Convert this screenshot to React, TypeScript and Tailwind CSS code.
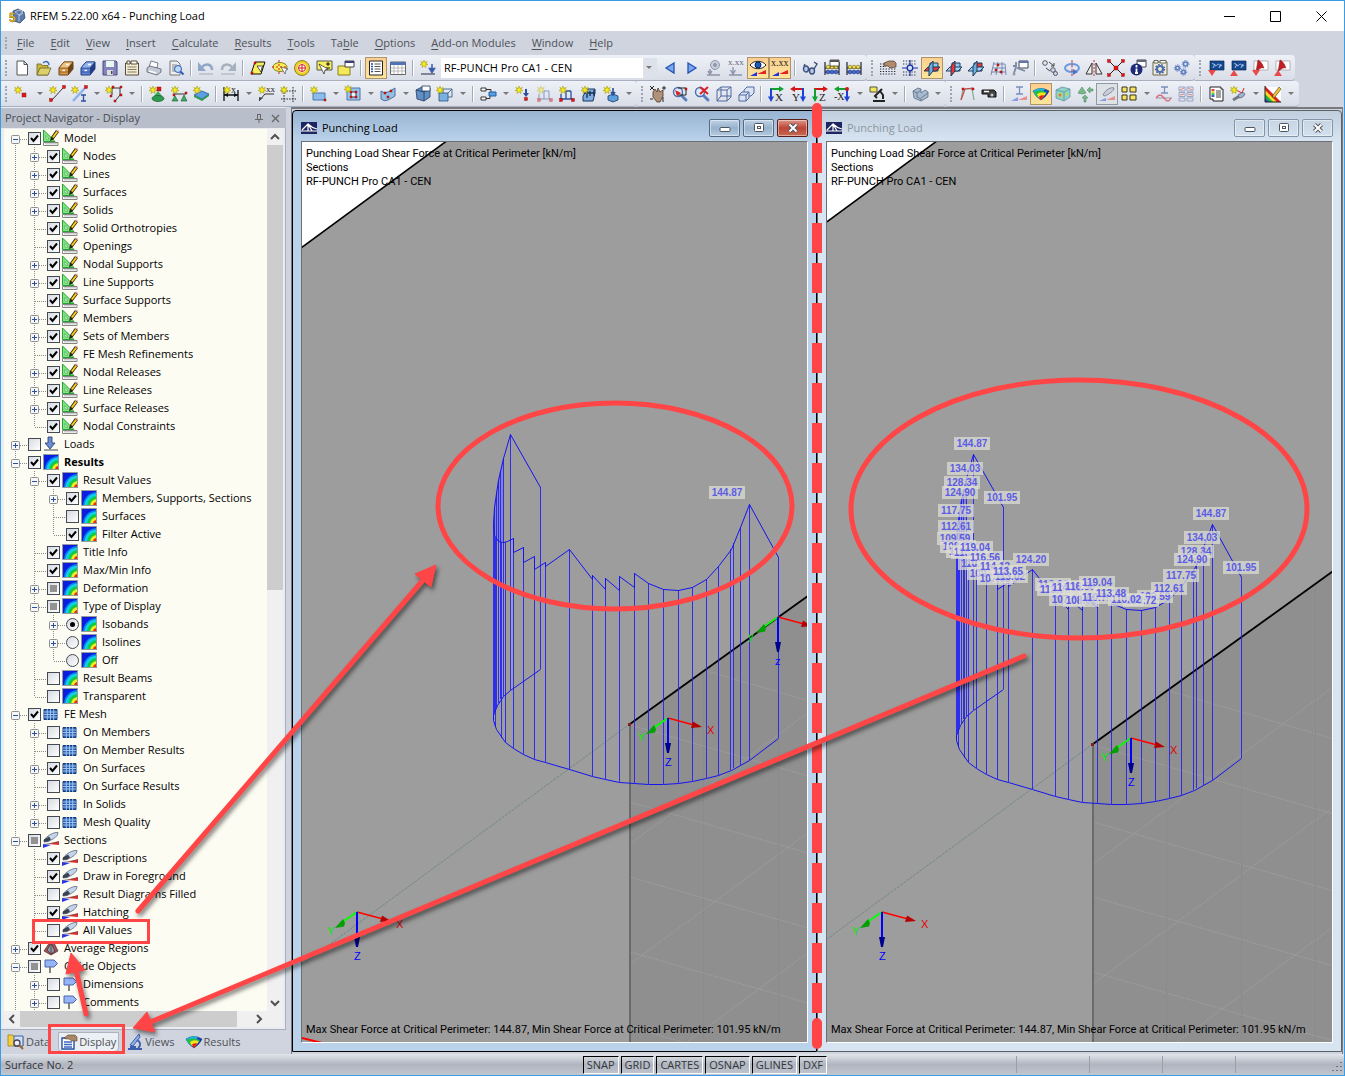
import React, { useState } from 'react';
import clsx from 'clsx';

/* ---------- icon primitives ---------- */

const Star = ({ x = 4, y = 4 }: { x?: number; y?: number }) => (
  <g transform={`translate(${x} ${y})`}>
    <path d="M0-4 1-1.4 3.2-2.6 1.8-.6 4 .6 1.5.9 2 3.6 0 1.8-2 3.6-1.5.9-4 .6-1.8-.6-3.2-2.6-1-1.4Z" fill="#f4ea1c" stroke="#a89c12" strokeWidth=".6" />
  </g>
);

const Dot = ({ x, y, s = 3 }: { x: number; y: number; s?: number }) => (
  <rect x={x - s / 2} y={y - s / 2} width={s} height={s} fill="#e01818" stroke="#8a0808" strokeWidth=".4" />
);

const Txt = ({ x, y, c = '#222', s = 7, children }: { x: number; y: number; c?: string; s?: number; children: string }) => (
  <text x={x} y={y} fill={c} fontSize={s} fontFamily="Liberation Serif, serif">{children}</text>
);

const Cabinet = ({ top, front, dark }: { top: string; front: string; dark: string }) => (
  <g strokeLinejoin="round">
    <path d="m1 8 5-6h9v7l-5 6H1Z" fill={front} stroke={dark} />
    <path d="m1 8 5-6h9l-5 6Z" fill={top} stroke={dark} strokeWidth=".7" />
    <path d="m10 8 5-6v7l-5 6Z" fill={dark} />
    <path d="M4.500 10.500h2.500M8 4.500h3" stroke="#fff" strokeWidth="1.400" />
    <path d="M1 12h9" stroke={dark} strokeWidth=".6" />
  </g>
);

const Book = ({ red }: { red?: boolean }) => (
  <g>
    <path d="M2 1h14v9H2Z" fill={red ? '#fff' : '#14498f'} stroke={red ? '#999' : '#0c2a58'} strokeWidth=".7" />
    {red ? <path d="M4 12 6 0c4 2 5 6 6 8-3-1-5 1-8 4Z" fill="#c41e24" stroke="#7c1014" strokeWidth=".5" /> : <path d="M4 4c2-2 3 4 5 1s3 3 5 0M5 8l2-4M11 8l2-4" stroke="#cfe2ff" strokeWidth=".8" fill="none" />}
  </g>
);

const Cross3 = ({ fill }: { fill: 'h' | 'v' | 'd' }) => (
  <g strokeWidth="1" strokeLinejoin="round">
    <path d="M6 3h8v8H6Z" fill={fill === 'd' ? '#f03434' : '#8ccaf0'} stroke="#1c3c60" />
    <path d="M0 11 4 7h12l-4 4Z" fill={fill === 'h' ? '#f03434' : '#a4d4f4'} stroke="#1c3c60" />
    <path d="M5 6 9 1v10l-4 5Z" fill={fill === 'v' ? '#f03434' : '#6cb0e0'} stroke="#1c3c60" />
  </g>
);

const Cards = () => (
  <g fill="none" stroke="#223" strokeWidth="1.200">
    <path d="M1 15V2M15 15V2M1 12h14M1 8h14" />
    <g fill="#4a6ed0" stroke="#1a2f80" strokeWidth=".6"><circle cx="4" cy="12" r="1.900" /><circle cx="8" cy="12" r="1.900" /><circle cx="12" cy="12" r="1.900" /></g>
    <g fill="#f0e040" stroke="#776a10" strokeWidth=".6"><circle cx="4" cy="7" r="1.800" /><circle cx="8" cy="7" r="1.800" /><circle cx="12" cy="7" r="1.800" /></g>
  </g>
);

const AxisView = ({ l, a, b }: { l: string; a: string; b: string }) => (
  <g>
    <path d="M2 3h10" stroke={a} strokeWidth="2" /><path d="M11 0 16 3l-5 3Z" fill={a} />
    <path d="M3 3v9" stroke={b} strokeWidth="2" /><path d="M0 10.500 3 16l3-5.500Z" fill={b} />
    <Txt x={7} y={15} s={11}>{l}</Txt>
  </g>
);

const Lens = ({ handle = '#5a7fc0' }: { handle?: string }) => (
  <g><path d="m9 9 5 5" stroke={handle} strokeWidth="3" strokeLinecap="round" /><circle cx="6" cy="6" r="4.500" fill="#dbe9fa" stroke="#4a70b0" strokeWidth="1.400" /></g>
);

const Rainbow = () => (
  <g>
    <path d="M0 5Q8 0 16 5 14 10 8 14 2 10 0 5Z" fill="#1c34d0" stroke="#182a6c" strokeWidth=".6" />
    <path d="M0 5Q6 1 12 3L5 12Q1 9 0 5Z" fill="#18b8d8" />
    <path d="M1 6Q6 3 14 6L9 13Q3 11 1 6Z" fill="#26bc3c" />
    <path d="M4 8Q8 5 13 7.500L8 13.500Q5 12 4 8Z" fill="#f4e41c" />
    <path d="M6 10.500Q9 8.500 11.500 9.500L8 14Q6.500 12.500 6 10.500Z" fill="#e82018" />
  </g>
);

const Star1 = <Star x={4} y={4} />;

const ICONS: Record<string, React.ReactNode> = {
  new: <path d="M3 1h7l3.500 3.500V15H3ZM10 1v3.500h3.500" fill="#fff" stroke="#555" />,
  open: <g stroke="#6e6420" strokeWidth=".8"><path d="M1 15V4h4l1.500 1.500H12V15Z" fill="#c6b640" /><path d="m1 15 3-7h11l-3 7Z" fill="#dccf6c" /><path d="M7 3c3-3 6-1 6 2" stroke="#3b6fb8" strokeWidth="1.500" fill="none" /></g>,
  cabinet: <Cabinet top="#f0c480" front="#d89848" dark="#6c4418" />,
  cabinetBlue: <Cabinet top="#94b4f0" front="#5c84d8" dark="#243c80" />,
  save: <g><path d="M1 1h13l1 1v13H1Z" fill="#8583bd" stroke="#4b4a80" /><path d="M4 1h8v6H4Z" fill="#e8f6ee" /><path d="M5 10h6v5H5Z" fill="#ddd" /><path d="M9 11h1.500v3H9Z" fill="#444" /></g>,
  notes: <g><path d="M1.500 3h13v12h-13Z" fill="#f3ecd4" stroke="#5a4a38" /><path d="M3 1h3v3H3ZM7 1h6v3H7Z" fill="#fff" stroke="#5a4a38" /><path d="M3.500 7h9M3.500 9.500h9M3.500 12h9" stroke="#8a7a62" /></g>,
  print: <g stroke="#5a5f6c" strokeWidth=".8"><path d="m3 7 2-6 7 2-1 5Z" fill="#fff" /><path d="m1 8 3-2 11 3v3l-4 3L1 12Z" fill="#c4c9d6" /><path d="m3 11 7 2" stroke="#fff" strokeWidth="1.500" /></g>,
  preview: <g><path d="M2 1h7l3 3v11H2Z" fill="#eee" stroke="#777" /><path d="M4 5h5M4 7h4M4 9h3M4 11h3" stroke="#888" /><circle cx="10" cy="9" r="3.500" fill="#bcd8fa" stroke="#2d5fb4" /><path d="m12.500 11.500 3 3" stroke="#2d5fb4" strokeWidth="2" /></g>,
  undo: <g><path d="M4 7c4-4 10-3 10 3" fill="none" stroke="#8fa6c6" strokeWidth="2.500" /><path d="M0 2v9h8Z" fill="#8fa6c6" /><path d="M1 14h14" stroke="#a4adbb" /></g>,
  redo: <g><path d="M12 7C8 3 2 4 2 10" fill="none" stroke="#a7b0bd" strokeWidth="2.500" /><path d="M16 2v9H8Z" fill="#a7b0bd" /><path d="M1 14h14" stroke="#a4adbb" /></g>,
  selPara: <g><path d="M5 2h10l-4 12H1Z" fill="#f6ee5a" stroke="#111" /><path d="m7 6 4 6 1-5 2-1Z" fill="#fff" stroke="#111" strokeWidth=".7" /><Dot x={5} y={3} s={2} /><Dot x={2} y={13} s={2} /></g>,
  selEllipse: <g><ellipse cx="8" cy="7" rx="7" ry="4.500" fill="#f6ee5a" stroke="#8a8020" /><path d="M7 0v14M0 7h15" stroke="#e01818" strokeDasharray="2 2" /><path d="m9 7 4 7 1-4 2-1Z" fill="#fff" stroke="#333" strokeWidth=".6" /></g>,
  selRing: <g><circle cx="8" cy="8" r="6" fill="#fff" stroke="#f0d020" strokeWidth="3" /><circle cx="8" cy="8" r="7.500" fill="none" stroke="#7a6a10" strokeWidth=".8" /><circle cx="8" cy="8" r="3.500" fill="none" stroke="#d01818" /><path d="M8 5v6M5 8h6" stroke="#d01818" /></g>,
  selAdd: <g><path d="M1 1h15v9H1Z" fill="#f6ee5a" stroke="#555" /><path d="M10 4h4M12 2v4M10 8h4" stroke="#111" /><path d="m3 4 5 10 1-4 3-1Z" fill="#fff" stroke="#222" strokeWidth=".7" /></g>,
  folderWin: <g><path d="M0 6h12v9H0Z" fill="#f2e858" stroke="#8a8020" /><path d="M7 1h9v6H7Z" fill="#fff" stroke="#444" /><path d="M7 1h9v2H7Z" fill="#3d3d7a" /></g>,
  listPage: <g><path d="M1.500 1h13v14h-13Z" fill="#fff" stroke="#222" /><path d="M3 4h2M3 6.500h2M3 9h2M3 11.500h2" stroke="#2650a8" strokeWidth="1.300" /><path d="M6.500 4h6M6.500 6.500h6M6.500 9h6M6.500 11.500h6" stroke="#555" /></g>,
  table: <g><path d="M.5 2h15v12.500H.5Z" fill="#fff" stroke="#666" /><path d="M.5 2h15v3H.5Z" fill="#4f75b8" /><path d="M4 5v9M8 5v9M12 5v9M1 8h14M1 11h14" stroke="#aaa" strokeWidth=".8" /></g>,
  loadNew: <g>{Star1}<path d="M12 4v6M9.500 8.500 12 12.500l2.500-4Z" stroke="#3c5cae" strokeWidth="1.500" fill="#3c5cae" /><path d="M1 14h14" stroke="#667" strokeWidth="1.500" /></g>,
  left: <path d="m12 3-8 5 8 5Z" fill="#7ca8f0" stroke="#2450b0" strokeWidth="1.300" />,
  right: <path d="m4 3 8 5-8 5Z" fill="#7ca8f0" stroke="#2450b0" strokeWidth="1.300" />,
  eyeArrow: <g opacity=".8"><circle cx="9" cy="5" r="4.500" fill="#c0c8d8" stroke="#78839a" /><circle cx="9" cy="5" r="2" fill="#7c8698" /><path d="M1 15h13M4 9v4M2 11l2 3 2-3" stroke="#78839a" fill="none" strokeWidth="1.400" /></g>,
  xxGrey: <g><Txt x={0} y={5} c="#667" s={9}>x.xx</Txt><path d="M5 7v6M2.500 10 5 14l2.500-4M1 15h13" stroke="#8a94a8" fill="none" strokeWidth="1.300" /></g>,
  eyeOn: <g><path d="M0 5c4-5 12-5 16 0-4 5-12 5-16 0Z" fill="#fff" stroke="#222" /><circle cx="8" cy="5" r="3" fill="#1c5cb8" stroke="#0a1e50" /><path d="M0 16l7-4v4Z" fill="#2838d8" /><path d="m7 14 9-4v4Z" fill="#e82020" /></g>,
  xxOn: <g><Txt x={-1} y={6} s={10}>x.xx</Txt><path d="M0 16l7-4v4Z" fill="#2838d8" /><path d="m7 14 9-4v4Z" fill="#e82020" /></g>,
  glasses: <g fill="#b6ccee" stroke="#3d4f7c" strokeWidth="1.400"><ellipse cx="4" cy="9" rx="2.500" ry="3" /><ellipse cx="10" cy="11" rx="2.500" ry="3" /><path d="M2 6 3 4M12 9l3-5-3-2M6 9h2" fill="none" /></g>,
  abacusWin: <g><Cards /><path d="M6 0h9v6H6Z" fill="#fff" stroke="#333" strokeWidth=".8" /><path d="M6 0h9v2H6Z" fill="#555" /></g>,
  abacus: <Cards />,
  handGrid: <g><path d="M0 9h16M0 11.500h16M0 14h16M0 6.500h6M0 4h4" stroke="#223" strokeDasharray="1.300 1.500" /><path d="M4 3 9 1h5l2 2v4l-6 1-2-2H4Z" fill="#b08c6c" stroke="#4c3822" strokeWidth=".7" /></g>,
  gridTarget: <g><path d="M1 1h14M1 4h14M1 12h14M1 15h14" stroke="#334" strokeDasharray="1.300 1.500" /><path d="M8 0v16M0 8h16" stroke="#1a2fa0" strokeWidth="1.200" /><circle cx="8" cy="8" r="2.800" fill="#cfe0fa" stroke="#1a2fa0" strokeWidth="1.300" /></g>,
  planeH: <Cross3 fill="h" />,
  planeV: <Cross3 fill="v" />,
  planeD: <Cross3 fill="d" />,
  gridRed: <g><path d="m4 2-3 13M8 2 6 15M12 2v13M3 4h12l1 11M3 8h12M1 12h15" stroke="#7a8ab0" fill="none" /><Dot x={8} y={5} s={2} /><Dot x={6} y={10} s={2} /><Dot x={11} y={12} s={2} /></g>,
  snapWin: <g><path d="M7 1h9v7H7Z" fill="#fff" stroke="#445" /><path d="M7 1h9v2H7Z" fill="#6474a8" /><path d="M4 2v5l-2 6M5 8l8 3M4 6H1" stroke="#7a88a4" strokeWidth="1.800" fill="none" /><circle cx="2" cy="14" r="1.500" fill="#99a" /></g>,
  circles: <g fill="none" stroke="#556"><circle cx="3" cy="3" r="2.300" /><circle cx="11" cy="10" r="2.300" fill="#cfd6e8" /><circle cx="13.500" cy="13.500" r="2" fill="#cfd6e8" /><path d="m4 8 4 3M7 2l5 4M12 3v3H9" stroke="#444" /></g>,
  rotate: <g fill="none"><ellipse cx="8" cy="8" rx="7" ry="4" stroke="#6c9ae0" strokeWidth="2" /><path d="M8 0v16" stroke="#c33" strokeDasharray="3 1.500" /><path d="m9 9 5 3-5 3Z" fill="#4a78c8" /></g>,
  mirror: <g fill="#eee" stroke="#333"><path d="M6 3v11H0ZM10 3v11h6Z" /><path d="M8 0v16" stroke="#d22" strokeDasharray="2 1.500" /></g>,
  crossRed: <g><path d="M2 2l12 12M14 2 2 14" stroke="#222" /><Dot x={1} y={1} /><Dot x={15} y={1} /><Dot x={1} y={15} /><Dot x={15} y={15} /><Dot x={8} y={8} s={4} /></g>,
  info: <g><path d="M7 0h9v7H7Z" fill="#fff" stroke="#445" /><path d="M7 0h9v2H7Z" fill="#667" /><circle cx="6.500" cy="9.500" r="6" fill="#1c2a78" /><path d="M6.500 5v2.500M6.500 8.500v4.500M5 13h3" stroke="#fff" strokeWidth="1.800" /></g>,
  gearBox: <g><path d="M1 2h14v13H1Z" fill="#f2ecd8" stroke="#665" /><path d="M2 .5h4V3H2ZM8 .5h6V3H8Z" fill="#fff" stroke="#665" /><circle cx="8" cy="9" r="3" fill="none" stroke="#4f6fb0" strokeWidth="2.200" /><circle cx="8" cy="9" r="4.600" fill="none" stroke="#3f5fa8" strokeWidth="1.200" strokeDasharray="1.600 1.600" /></g>,
  gears: <g fill="none" stroke="#5a7ac0" strokeWidth="1.600"><circle cx="3.500" cy="8" r="1.800" /><circle cx="11.500" cy="4" r="2" /><circle cx="9.500" cy="12" r="1.800" /><g strokeWidth="1" strokeDasharray="1.200 1.200"><circle cx="3.500" cy="8" r="3.200" /><circle cx="11.500" cy="4" r="3.400" /><circle cx="9.500" cy="12" r="3.200" /></g></g>,
  bookDown: <g><Book /><path d="M0 10h8l-4 6Z" fill="#e84a4a" /></g>,
  bookUp: <g><Book /><path d="M0 16h8l-4-6Z" fill="#e84a4a" /></g>,
  pdfDown: <g><Book red /><path d="M0 10h8l-4 6Z" fill="#e84a4a" /></g>,
  pdfUp: <g><Book red /><path d="M0 16h8l-4-6Z" fill="#e84a4a" /></g>,

  node: <g>{Star1}<Dot x={10} y={9} s={4} /></g>,
  line: <g><path d="M3 14 14 2" stroke="#333" /><Star x={4} y={4} /><Dot x={2} y={14} /><Dot x={15} y={1} /></g>,
  member: <g><path d="M2 15 14 2" stroke="#8cb0f0" strokeWidth="2.500" />{Star1}<Dot x={15} y={1} /><path d="M10 9h5M10 15h5M12.500 9v6" stroke="#2d4f9e" strokeWidth="1.300" /></g>,
  polyline: <g><path d="M6 2h8v7l-4 5M6 2v7" stroke="#333" fill="none" /><Star x={3} y={4} /><Dot x={7} y={1} s={2} /><Dot x={15} y={1} s={2} /><Dot x={15} y={9} s={2} /><Dot x={5} y={10} s={2} /><Dot x={9} y={15} s={2} /></g>,
  support: <g>{Star1}<Dot x={10} y={3} s={4} /><path d="M9 5 5 10h8Z" fill="#3eac60" /><ellipse cx="9" cy="12.500" rx="6" ry="3" fill="#2e9c50" stroke="#155a2a" strokeWidth=".7" /></g>,
  lineSupport: <g><path d="M3 8h12" stroke="#333" />{Star1}<Dot x={3} y={9} s={2} /><Dot x={15} y={7} s={2} /><path d="M4 10 1 15h6ZM13 9l-3 6h6Z" fill="#3eac60" stroke="#155a2a" strokeWidth=".6" /></g>,
  surfSupport: <g><path d="m1 9 8-4 7 3-7 5Z" fill="#5aa0e8" stroke="#1e4a80" strokeWidth=".7" /><path d="M1 9v2l8 4 7-5V8l-7 5Z" fill="#2e9c50" />{Star1}</g>,
  dim: <g><path d="M1 1v14M15 4v11M1 9h14" stroke="#111" strokeWidth="1.300" /><path d="m1 9 4-2v4ZM15 9l-4-2v4Z" fill="#111" /><Star x={4} y={4} /><Txt x={8} y={7} s={10}>x</Txt></g>,
  comment: <g><path d="m1 15 6-7h9" stroke="#333" fill="none" /><Star x={4} y={4} /><Txt x={8} y={6} s={9}>xx</Txt><path d="M1 15v-4l4 1Z" fill="#444" /></g>,
  gridNew: <g><path d="M4 1v15M13 1v15M1 5h15M1 13h15" stroke="#222" strokeDasharray="1.500 1.200" />{Star1}</g>,
  surface: <g><path d="M3 7h12v7H3Z" fill="#8cbcec" stroke="#4878a8" />{Star1}<Dot x={15} y={14} s={2} /></g>,
  opening: <g><path d="M2 2h13v12H2Z" fill="#9cc4ec" stroke="#4878a8" /><path d="M6 6h5v5H6Z" fill="#eef4fc" stroke="#445" /><Dot x={6} y={6} s={2} /><Dot x={11} y={6} s={2} /><Dot x={6} y={11} s={2} /><Dot x={11} y={11} s={2} /><Star x={3} y={3} /></g>,
  fold: <g><path d="M1 5q3 3 7 1t7-4v8q-3 2-7 4t-7-1Z" fill="#94c0e4" stroke="#48709c" /><Dot x={5} y={7} s={2} /><Dot x={11} y={5} s={2} /><Dot x={8} y={11} s={2} /></g>,
  solid: <g stroke="#223a5e" strokeWidth=".8"><path d="m1 4 6-3 8 1v9l-6 4-7-2Z" fill="#5f8fc4" /><path d="m1 4 8 2v9M9 6l6-4" fill="none" /><path d="M7 0h8v5H7Z" fill="#fff" /></g>,
  solidNew: <g stroke="#28517e" strokeWidth=".8"><path d="M2 7h9v8H2Z" fill="#7ab0e0" /><path d="M6 3h9v8h-4M6 3v4M11 7l4-4" fill="none" /><Star x={3} y={4} /></g>,
  boxes: <g><path d="M1 2h5v3H1ZM1 11h5v3H1Z" fill="#fff" stroke="#333" /><path d="M6 3.500h5v4M6 12.500h4v-3" fill="none" stroke="#333" /><path d="M9 6h7v4H9Z" fill="#5a9fe0" stroke="#1d5fa4" /></g>,
  load: <g>{Star1}<path d="M11 3v6" stroke="#2d4f9e" strokeWidth="2" /><path d="m8 7 3 4 3-4Z" fill="#2d4f9e" /><Dot x={11} y={13} /></g>,
  memberLoadOff: <g opacity=".5">{Star1}<path d="M2 8v5M7 5v8M12 5v8M7 5h5M1 13h13" stroke="#2d4f9e" fill="none" /><Dot x={2} y={14} /><Dot x={14} y={14} /></g>,
  memberLoad: <g><path d="M2 8v5M7 5v8M12 5v8M7 5h5M1 13h13" stroke="#2d4f9e" strokeWidth="1.300" fill="none" />{Star1}<Dot x={2} y={14} /><Dot x={14} y={14} /></g>,
  surfLoad: <g><path d="M3 3h11v4H3ZM2 10l2-3h10l-2 8H2Z" fill="#7dafe0" stroke="#1d3560" /><path d="M6 5v7M9 5v5M13 4v6" stroke="#182a50" strokeWidth="1.300" />{Star1}</g>,
  solidLoad: <g>{Star1}<path d="m5 10 5-2 5 2v4l-5 2-5-2Z" fill="#5aa0e0" stroke="#1d3560" strokeWidth=".8" /><path d="M10 2v5M8 6l2 3 2-3" stroke="#2d4f9e" strokeWidth="1.600" fill="none" /></g>,
  pan: <g><path d="m3 6 2-3 2 3 1-4 2 4 3-2v6l-3 6H7L3 11Z" fill="#b0927a" stroke="#4c3822" strokeWidth=".8" /><path d="M0 0l4 4M4 0 0 4M12 2h4M14 0v4M0 13h3M13 11v5" stroke="#222" /></g>,
  zoomWin: <g><Lens /><path d="M6 2h8v7H6" fill="none" stroke="#222" /><path d="m3 4 6 3-4 3Z" fill="#d22" /><Dot x={14} y={3} s={2} /></g>,
  zoomOff: <g><Lens /><path d="m6 1 8 7M14 1 6 8" stroke="#d22" strokeWidth="2" /></g>,
  wire: <g fill="none" stroke="#5068a0"><path d="m1 4 4-3h10v10l-4 4H1ZM1 4h10v11M11 4l4-3M5 1v9h10M5 10l-4 5" /></g>,
  wireSolid: <g fill="#dce4f4" stroke="#5068a0"><path d="m6 4 3-3h7v6l-3 3H6Z" /><path d="m1 9 3-3h7v6l-3 3H1Z" /><path d="M1 9h7v6M8 9l3-3" fill="none" /></g>,
  viewX: <AxisView l="X" a="#12a030" b="#2040d8" />,
  viewY: <g><path d="M13 3H3M4 3h8" stroke="#d01818" strokeWidth="2" /><path d="M5 0 0 3l5 3Z" fill="#d01818" /><path d="M13 2v10" stroke="#2040d8" strokeWidth="2" /><path d="m10 10.500 3 5.500 3-5.500Z" fill="#2040d8" /><Txt x={2} y={15} s={11}>Y</Txt></g>,
  viewZ: <AxisView l="Z" a="#d01818" b="#12a030" />,
  viewNX: <g><path d="M3 3h10" stroke="#12a030" strokeWidth="2" /><path d="M5 0 0 3l5 3Z" fill="#12a030" /><path d="M13 3v9" stroke="#2040d8" strokeWidth="2" /><path d="m10 10.500 3 5.500 3-5.500Z" fill="#2040d8" /><circle cx="13" cy="3" r="2" fill="#d01818" /><Txt x={0} y={14} s={10}>-X</Txt></g>,
  pointer: <g><path d="M1 1h7v5H1Z" fill="#f2e858" stroke="#554" /><path d="m13 3-7 7 2 2M11 5l3 4v4M4 15h12" stroke="#222" strokeWidth="2" fill="none" /></g>,
  boxGrey: <g stroke="#5c6c84" strokeWidth=".8"><path d="m1 5 5-3 3 1v4l4-3 3 2v5l-7 4-7-3Z" fill="#a8bad0" /><path d="m1 5 4 2v4l4 2v2M9 12l7-5M5 7l4-3" fill="none" /></g>,
  frame: <g fill="none" strokeWidth="1.200"><path d="M2 14 4 3h9l2 11" stroke="#7a8" /><path d="m2 14 4-11 8-1" stroke="#c44" /><Dot x={14} y={3} s={2} /><Dot x={4} y={3} s={2} /></g>,
  flash: <g><path d="M1 4h12l2 2v5H7V8H1Z" fill="#444" stroke="#111" /><path d="M3 5.500h5" stroke="#fff" strokeWidth="1.500" /><circle cx="11" cy="9" r="1.500" fill="#ccc" /></g>,
  diagBeam: <g><path d="M5 1h7M5 8h7M8.500 1v7" stroke="#7a8fc0" strokeWidth="1.300" /><path d="M0 15l7-4v4Z" fill="#8a9ae8" /><path d="m7 14 9-4v4Z" fill="#e89090" /></g>,
  isobands: <Rainbow />,
  cube: <g strokeWidth=".7"><path d="m1 4 6-3 8 2v8l-6 4-8-3Z" fill="#8cd4c8" stroke="#5a8aa0" /><path d="m1 4 8 2v9M9 6l6-3" fill="none" stroke="#5a8aa0" /><circle cx="5" cy="9" r="2.500" fill="#a8e070" /><circle cx="5" cy="9" r="1.500" fill="#e87050" /><circle cx="12" cy="8" r="1.500" fill="#c0d850" /></g>,
  supports: <g fill="#7ab88c" stroke="#4c8c60" strokeWidth=".6"><path d="M5 1 1 7q4 2 8 0Z" /><path d="m10 4 3-3v2h3v2h-3v2ZM8 9l3 3H9v4H7v-4H5Z" /></g>,
  knife: <g><path d="M4 9C7 3 12 1 15 2c0 3-5 6-9 8Z" fill="#c8d0e0" stroke="#889" /><path d="M0 15l7-3v3Z" fill="#8a9ae8" /><path d="m7 14 9-4v4Z" fill="#e89090" /></g>,
  panels: <g fill="#f6e468" stroke="#3a3410"><path d="M1 1h5v5H1ZM9 1h6v5H9ZM1 9h5v5H1ZM9 9h6v5H9Z" /></g>,
  beamWave: <g fill="none"><path d="M5 1h7M5 7h7M8.500 1v6" stroke="#7a8fc0" strokeWidth="1.300" /><path d="M0 12h16" stroke="#99a" /><path d="M0 12c3-4 5-4 8 0s5 4 7 0" stroke="#d86a80" strokeWidth="1.300" /></g>,
  filterGrid: <g fill="none" stroke="#98a4c4"><path d="M1 1h6v4H1ZM9 1h6v4H9ZM1 6.500h6v4H1ZM9 6.500h6v4H9ZM1 12h6v3H1ZM9 12h6v3H9Z" /><path d="m2 4 4-2M10 2l4 2M2 9l4-1M10 8l4 1" stroke="#e08080" /></g>,
  report: <g><path d="M2 1h11v2h2v12H5v-2H2Z" fill="#fff" stroke="#222" /><path d="M3.500 4h3" stroke="#d22" strokeWidth="1.700" /><path d="M3.500 6h3" stroke="#e8d020" strokeWidth="1.700" /><path d="M3.500 8h3" stroke="#2b4" strokeWidth="1.700" /><path d="M3.500 10h3" stroke="#24c" strokeWidth="1.700" /><path d="M8 5h5M8 7h5M8 9h5M8 11h5" stroke="#444" /></g>,
  wand: <g><path d="m3 14 10-6" stroke="#778" strokeWidth="3" /><path d="M6 4l6 3 2-5" stroke="#d22" fill="none" />{Star1}<path d="M8 9c4-3 6-3 7-1-1 3-4 4-6 4Z" fill="#9cb4d0" stroke="#445" strokeWidth=".6" /></g>,
  colorPen: <g><path d="M0 1h16v14H0Z" fill="#fff" /><path d="M0 0 16 16H8L0 8Z" fill="#e02020" /><path d="M0 4 12 16H8L0 8Z" fill="#f2e020" /><path d="M0 8l8 8H0Z" fill="#20b040" /><path d="m0 12 4 4H0Z" fill="#2040d8" /><path d="M0 0v16h16" fill="none" stroke="#222" /><path d="m8 9 6-8 2 2-6 8-2 1Z" fill="#f0c030" stroke="#443" strokeWidth=".6" /></g>,

  app: <g><path d="m4 3 5-2 6 3 1 6-5 5-6-2Z" fill="#5a79a8" stroke="#2a3c5c" strokeWidth=".7" /><path d="m6 4 4-2 4 2-4 3ZM10 7v7M14 5l-4 3" fill="none" stroke="#c4d4ea" strokeWidth=".8" /><text x="0" y="14" fill="#f2c818" stroke="#5a4808" strokeWidth=".4" fontSize="12" fontWeight="bold" fontFamily="Liberation Sans, sans-serif">5</text></g>,
  view: <g><path d="M0 2h16v12H0Z" fill="#1c2462" /><path d="M0 11h16M1 10l6-6 4 7M7 4v7M7 4q4 4 9 5" stroke="#fff" strokeWidth="1.200" fill="none" /></g>,

  model: <g><path d="M.5 0 12 11.500H.5Z" fill="#7ee87e" stroke="#2c9c3c" /><path d="M3 5.500 6 9H3Z" fill="#fff" stroke="#2c9c3c" strokeWidth=".6" /><path d="M7 11 8 7l5-7 3 2-6 8Z" fill="#2c2410" /><path d="m9 7 4.500-6 1.500 1.200L10.500 8Z" fill="#f8cc20" /><path d="m13 0 2.500 2 .5-1.500L14-.5Z" fill="#ecb0b8" /><path d="M.5 12.500h14.500v3H.5Z" fill="#fff" stroke="#777" strokeWidth=".9" /><path d="M3 13v1.500M5 13v1.500M7 13v1.500M9 13v1.500M11 13v1.500M13 13v1.500" stroke="#777" strokeWidth=".7" /></g>,
  loads: <g><path d="M5 1h4v6h3l-5 6-5-6h3Z" fill="#6a8cd4" stroke="#2c4478" strokeWidth=".9" /><path d="M1 14h14" stroke="#444" /></g>,
  results: <g><path d="M.5 .5h15v15H.5Z" fill="#0a1ee0" /><path d="M2 16A14 14 0 0 1 16 2V16Z" fill="#0a80f0" /><path d="M3.500 16A12.500 12.500 0 0 1 16 3.500V16Z" fill="#12d0e8" /><path d="M6 16A10 10 0 0 1 16 6V16Z" fill="#10cc40" /><path d="M9 16A7 7 0 0 1 16 9V16Z" fill="#f0ec20" /><path d="M12 16A4 4 0 0 1 16 12V16Z" fill="#f02810" /><path d="M.5 .5h15v15H.5Z" fill="none" stroke="#9a9a9a" /></g>,
  mesh: <g><path d="M1 3.500h13v10H1Z" fill="#2a62b4" stroke="#183a74" /><path d="M4.300 3v11M7.500 3v11M10.700 3v11M1 6h13M1 8.500h13M1 11h13" stroke="#a8cbf2" strokeWidth=".9" /></g>,
  section: <g><path d="M1 8C4 4 10 0 15 .5 15 4 11 7 5 9.500L1 10Z" fill="#c4d4ea" stroke="#5b6680" strokeWidth=".8" /><path d="m1 7.500 5-3 2 3-3 2-4 .5Z" fill="#39424f" /><path d="M0 16v-4l8 1Z" fill="#2434f0" /><path d="m5 12 11-3v4Z" fill="#e02c2c" /><path d="M0 12.500 16 10" stroke="#555" strokeWidth=".6" /></g>,
  average: <g stroke="#46282c" strokeWidth=".7"><path d="m1 11 6-9 4 1 4 8-7 4Z" fill="#a45058" /><path d="m4 10 4-7 4 8-4 3Z" fill="#8c98a4" /><path d="M8 3v11" /></g>,
  guide: <g><path d="M2 2h9l3.500 3.500L11 9H2Z" fill="#96b4f8" stroke="#4864b0" /><path d="M7 9v6" stroke="#777" strokeWidth="1.800" /></g>,
  data: <g><path d="M0 1h5l1 2h9v9H0Z" fill="#f2ce40" stroke="#a2801c" strokeWidth=".8" /><path d="M6 2h9v10H6Z" fill="#cfe0f6" stroke="#3c62a8" /><circle cx="9" cy="9" r="3" fill="#eef" stroke="#445" strokeWidth="1.300" /><path d="m11 11 4 4" stroke="#986830" strokeWidth="2" /></g>,
  display: <g><path d="M1 4h12v11H1Z" fill="#fff" stroke="#2450a8" strokeWidth="1.400" /><path d="M3 8h8M3 10.500h8M3 13h8" stroke="#3c68c0" strokeWidth="1.300" /><path d="m3 4 4-3h7l2 2v4h-5L8 5H5Z" fill="#a88868" stroke="#5c4428" strokeWidth=".6" /></g>,
  views: <g><path d="m12 0-9 11 3 1 7-9Z" fill="#8fb0e4" stroke="#3d5fae" /><path d="M10 6c4 2 4 6 1 8M1 15h14M3 13h6" stroke="#3d5fae" strokeWidth="1.800" fill="none" /></g>,
};

const Icon = ({ name }: { name: string }) => (
  <svg viewBox="0 0 16 16" className="h-4 w-4 shrink-0 overflow-visible" fill="none" aria-hidden="true">
    {ICONS[name]}
  </svg>
);

/* ---------- toolbars ---------- */

// "name", "name:on" for a pressed button, "name:menu" for one with a drop-down arrow, "|" for a divider
const BAR_FILE = 'new open cabinet cabinetBlue save notes print preview | undo redo | selPara selEllipse selRing selAdd folderWin | listPage:on table | loadNew'.split(' ');
const BAR_CASE = 'left right eyeArrow xxGrey eyeOn:on xxOn:on | glasses abacusWin abacus'.split(' ');
const BAR_GRID = 'handGrid gridTarget planeH:on planeV planeD gridRed snapWin | circles rotate mirror crossRed info gearBox gears'.split(' ');
const BAR_EXPORT = 'bookDown bookUp pdfDown pdfUp'.split(' ');
const BAR_INSERT = 'node:menu line member:menu polyline:menu | support lineSupport surfSupport | dim:menu comment gridNew | surface:menu opening:menu fold:menu solid solidNew:menu | boxes:menu load memberLoadOff memberLoad surfLoad solidLoad:menu'.split(' ');
const BAR_VIEW = 'pan zoomWin zoomOff wire wireSolid | viewX viewY viewZ viewNX:menu pointer:menu | boxGrey:menu'.split(' ');
const BAR_RESULT = 'frame flash | diagBeam isobands:on cube supports knife:flat panels:menu beamWave filterGrid | report wand:menu colorPen:menu'.split(' ');

const Tools = ({ items }: { items: string[] }) => (
  <>
    {items.map((item, i) => {
      if (item === '|') return <span key={i} className="mx-[3px] h-4 w-[2px] border-l border-[#a3a9b6] bg-white" />;
      const [name, mod] = item.split(':');
      return (
        <React.Fragment key={i}>
          <button
            aria-label={name}
            className={clsx(
              'flex h-[22px] w-[22px] shrink-0 items-center justify-center border',
              mod === 'on' && 'border-[#b09468] bg-linear-to-b from-[#fbcf92] to-[#fde59a]',
              mod === 'flat' && 'border-[#8f9aa0] bg-[#dde2e6]',
              mod !== 'on' && mod !== 'flat' && 'border-transparent hover:bg-[#fde8b8]'
            )}
          >
            <Icon name={name} />
          </button>
          {mod === 'menu' && (
            <button aria-label={`${name} menu`} className="flex h-[22px] w-[13px] shrink-0 items-center justify-center">
              <svg viewBox="0 0 6 3" className="h-[3px] w-[6px]"><path d="M0 0h6L3 3Z" fill="#777" /></svg>
            </button>
          )}
        </React.Fragment>
      );
    })}
  </>
);

const Bar = ({ children }: { children: React.ReactNode }) => (
  <div className="flex h-[26px] shrink-0 items-center rounded-r-sm border-b border-[#a9afbc] bg-linear-to-b from-[#eef1f7] to-[#d9dde7] pr-[2px]">
    <span className="ml-[4px] mr-[4px] h-4 w-[2px] border-l-2 border-dotted border-[#9ea4b1]" />
    {children}
  </div>
);

/* ---------- navigator tree ---------- */

type Row = [depth: number, expander: '' | '+' | '-', state: 'on' | 'off' | 'mixed' | 'radio' | 'radio-on', icon: string, label: string];

const ROWS: Row[] = [
  [0, '-', 'on', 'model', 'Model'],
  [1, '+', 'on', 'model', 'Nodes'],
  [1, '+', 'on', 'model', 'Lines'],
  [1, '+', 'on', 'model', 'Surfaces'],
  [1, '+', 'on', 'model', 'Solids'],
  [1, '', 'on', 'model', 'Solid Orthotropies'],
  [1, '', 'on', 'model', 'Openings'],
  [1, '+', 'on', 'model', 'Nodal Supports'],
  [1, '+', 'on', 'model', 'Line Supports'],
  [1, '', 'on', 'model', 'Surface Supports'],
  [1, '+', 'on', 'model', 'Members'],
  [1, '+', 'on', 'model', 'Sets of Members'],
  [1, '', 'on', 'model', 'FE Mesh Refinements'],
  [1, '+', 'on', 'model', 'Nodal Releases'],
  [1, '+', 'on', 'model', 'Line Releases'],
  [1, '+', 'on', 'model', 'Surface Releases'],
  [1, '', 'on', 'model', 'Nodal Constraints'],
  [0, '+', 'off', 'loads', 'Loads'],
  [0, '-', 'on', 'results', 'Results'],
  [1, '-', 'on', 'results', 'Result Values'],
  [2, '+', 'on', 'results', 'Members, Supports, Sections'],
  [2, '', 'off', 'results', 'Surfaces'],
  [2, '', 'on', 'results', 'Filter Active'],
  [1, '', 'on', 'results', 'Title Info'],
  [1, '', 'on', 'results', 'Max/Min Info'],
  [1, '+', 'mixed', 'results', 'Deformation'],
  [1, '-', 'mixed', 'results', 'Type of Display'],
  [2, '+', 'radio-on', 'results', 'Isobands'],
  [2, '+', 'radio', 'results', 'Isolines'],
  [2, '', 'radio', 'results', 'Off'],
  [1, '', 'off', 'results', 'Result Beams'],
  [1, '', 'off', 'results', 'Transparent'],
  [0, '-', 'on', 'mesh', 'FE Mesh'],
  [1, '+', 'off', 'mesh', 'On Members'],
  [1, '', 'off', 'mesh', 'On Member Results'],
  [1, '+', 'on', 'mesh', 'On Surfaces'],
  [1, '', 'off', 'mesh', 'On Surface Results'],
  [1, '+', 'off', 'mesh', 'In Solids'],
  [1, '+', 'off', 'mesh', 'Mesh Quality'],
  [0, '-', 'mixed', 'section', 'Sections'],
  [1, '', 'on', 'section', 'Descriptions'],
  [1, '', 'on', 'section', 'Draw in Foreground'],
  [1, '', 'off', 'section', 'Result Diagrams Filled'],
  [1, '', 'on', 'section', 'Hatching'],
  [1, '', 'off', 'section', 'All Values'],
  [0, '+', 'on', 'average', 'Average Regions'],
  [0, '-', 'mixed', 'guide', 'Guide Objects'],
  [1, '+', 'off', 'guide', 'Dimensions'],
  [1, '+', 'off', 'guide', 'Comments'],
];

// true when another row of this depth follows before the branch closes
const continues = (index: number, depth: number) => {
  for (let i = index + 1; i < ROWS.length; i++) {
    if (ROWS[i][0] < depth) return false;
    if (ROWS[i][0] === depth) return true;
  }
  return true;
};

const TreeRow = ({ row, index }: { row: Row; index: number }) => {
  const [depth, expander, state, icon, label] = row;
  const radio = state.startsWith('radio');
  return (
    <li className="flex h-[18px] items-center">
      {Array.from({ length: depth }, (_, d) => (
        <svg key={d} className="h-[18px] w-[19px] shrink-0" viewBox="0 0 19 18">
          {continues(index, d) && <path d="M9.500 0v18" stroke="#8a8a8a" strokeDasharray="1 1" />}
        </svg>
      ))}
      <svg className="h-[18px] w-[22px] shrink-0" viewBox="0 0 22 18">
        <path d={`M9.500 ${index === 0 ? 10 : 0}V${continues(index, depth) ? 18 : 10}M10 10.500h11`} stroke="#8a8a8a" strokeDasharray="1 1" fill="none" />
        {expander && (
          <g>
            <rect x="5.500" y="6.500" width="8" height="8" rx="1" fill="#f6f7fa" stroke="#8e8e8e" />
            <path d={expander === '+' ? 'M7 10.500h5M9.500 8v5' : 'M7 10.500h5'} stroke="#2b4f9c" />
          </g>
        )}
      </svg>
      <label className="flex items-center whitespace-nowrap">
        <span className="relative flex h-[13px] w-[13px] shrink-0">
          <input
            type={radio ? 'radio' : 'checkbox'}
            name={radio ? 'display-type' : undefined}
            defaultChecked={state === 'on' || state === 'radio-on'}
            className={clsx(
              'peer h-[13px] w-[13px] appearance-none border border-[#444a52] bg-linear-to-br from-[#d6dae2] to-white',
              radio && 'rounded-full'
            )}
          />
          {radio ? (
            <span className="pointer-events-none absolute left-[4px] top-[4px] hidden h-[5px] w-[5px] rounded-full bg-black peer-checked:block" />
          ) : (
            <svg viewBox="0 0 13 13" className="pointer-events-none absolute inset-0 hidden peer-checked:block">
              <path d="m3 6 2.500 3L10 3.500" fill="none" stroke="#000" strokeWidth="2" />
            </svg>
          )}
          {state === 'mixed' && <span className="pointer-events-none absolute left-[3px] top-[3px] h-[7px] w-[7px] bg-[#929292]" />}
        </span>
        <span className="ml-[2px] flex"><Icon name={icon} /></span>
        <span className={clsx('ml-[5px]', label === 'Results' && 'font-bold')}>{label}</span>
      </label>
    </li>
  );
};

const Chevron = ({ d }: { d: string }) => (
  <svg viewBox="0 0 16 16" className="h-4 w-4"><path d={d} fill="none" stroke="#505050" strokeWidth="2" /></svg>
);

const TABS = [
  { id: 'data', label: 'Data' },
  { id: 'display', label: 'Display' },
  { id: 'views', label: 'Views' },
  { id: 'isobands', label: 'Results' },
];

const Navigator = () => {
  const [tab, setTab] = useState('display');
  return (
    <aside className="flex w-[285px] shrink-0 flex-col">
      <header className="flex h-[21px] items-center border-t border-[#e8ebf1] bg-[#b9bfca] pl-[4px] pr-[3px] text-[#484c54]">
        <span className="flex-1">Project Navigator - Display</span>
        <button aria-label="Pin" className="flex h-4 w-4 items-center justify-center">
          <svg viewBox="0 0 8 9" className="h-[9px] w-2"><path d="M2.500 0v5M5.500 0v5M2 .5h4M0 5.500h8M4 6v3" stroke="#666" fill="none" /></svg>
        </button>
        <button aria-label="Close panel" className="flex h-4 w-4 items-center justify-center">
          <svg viewBox="0 0 9 9" className="h-[9px] w-[9px]"><path d="m1 1 7 7M8 1 1 8" stroke="#666" strokeWidth="1.300" /></svg>
        </button>
      </header>
      <div className="flex flex-1 flex-col border-b border-r border-[#a9aebb] bg-[#e9edf3] pb-[2px] pl-[3px] pr-[2px] pt-px">
        <div className="flex flex-1">
          <ul className="flex-1 overflow-hidden bg-[#fdfcf3] pl-[2px] text-black">
            {ROWS.map((row, i) => <TreeRow key={i} row={row} index={i} />)}
          </ul>
          <div className="flex w-4 shrink-0 flex-col bg-[#f0f0f0]">
            <button aria-label="Scroll up"><Chevron d="m4 10 4-4 4 4" /></button>
            <span className="flex-11 bg-[#cdcdcd]" />
            <span className="flex-10" />
            <button aria-label="Scroll down"><Chevron d="m4 6 4 4 4-4" /></button>
          </div>
        </div>
        <div className="flex h-4 bg-[#f0f0f0] pr-4">
          <button aria-label="Scroll left"><Chevron d="m10 4-4 4 4 4" /></button>
          <span className="w-[217px] bg-[#cdcdcd]" />
          <span className="flex-1" />
          <button aria-label="Scroll right"><Chevron d="m6 4 4 4-4 4" /></button>
        </div>
      </div>
      <nav className="flex h-6 items-center gap-[5px] pl-[4px] text-[#4d5158]">
        {TABS.map((t) => (
          <button
            key={t.id}
            onClick={() => setTab(t.id)}
            className={clsx(
              'flex h-[20px] items-center gap-[2px] rounded-b border px-[2px]',
              tab === t.id ? 'border-[#aeb4be] bg-[#eceff3]' : 'border-transparent'
            )}
          >
            <Icon name={t.id} />
            {t.label}
          </button>
        ))}
      </nav>
    </aside>
  );
};

/* ---------- model drawing ---------- */

// base of the perimeter: x, y
const BASE: [number, number][] = [
  [540, 669], [510, 690], [503, 696], [497, 705], [493, 715], [493, 720], [496, 729], [505, 742], [513, 748], [523, 754],
  [534, 759], [545, 762], [569, 769], [592, 776], [605, 779], [619, 782], [634, 783], [648, 784], [663, 784], [678, 783],
  [692, 781], [706, 778], [718, 775], [731, 770], [740, 765], [749, 760], [778, 738],
];

// force curve above the base
const CURVE: [number, number][] = [
  [540, 487], [510, 434], [503, 458], [498, 480], [494, 507], [493, 523], [494, 535], [496, 538], [498, 541], [503, 542],
  [507, 541], [513, 538], [513, 552], [523, 547], [523, 562], [534, 556], [534, 569], [545, 562], [545, 566], [569, 549],
  [592, 579], [592, 575], [605, 589], [605, 578], [619, 590], [619, 576], [634, 587], [634, 573], [648, 583], [663, 589],
  [678, 590], [692, 587], [706, 579], [718, 566], [731, 549], [740, 527], [749, 504], [778, 557],
];

// ordinates: x, top, bottom
const ORDINATES: [number, number, number][] = [
  [540, 487, 669], [510, 434, 690], [503, 458, 696], [500, 471, 699], [498, 480, 703], [496, 492, 707], [494, 507, 712], [493, 523, 720],
  [495, 538, 727], [501, 542, 738], [505, 542, 742], [513, 538, 748], [523, 547, 754], [534, 556, 759], [545, 562, 762],
  [569, 549, 769], [592, 575, 776], [605, 578, 779], [619, 576, 782], [634, 573, 783], [648, 583, 784], [663, 589, 784],
  [678, 590, 783], [692, 587, 781], [706, 579, 778], [718, 566, 775], [730, 549, 770], [733, 543, 768], [740, 527, 765],
  [749, 504, 760], [778, 557, 738],
];

const pts = (list: [number, number][]) => list.map(([x, y]) => `${x + 0.5},${y + 0.5}`).join(' ');

const Triad = ({ x, y, labels = ['X', 'Y', 'Z'] }: { x: number; y: number; labels?: string[] }) => (
  <g transform={`translate(${x} ${y})`} fontSize="11" fontFamily="Liberation Sans, sans-serif">
    <path d="m0 0 26 7" stroke="#f00" strokeWidth="1.500" />
    <path d="m25 3.500 9 5.500-11 1Z" fill="#b40000" />
    <path d="m0 0-16 11" stroke="#0f0" strokeWidth="1.800" />
    <path d="m-14 7-8 9 9-1.500 1-3.500Z" fill="#00a000" />
    <path d="M0 0v27" stroke="#00f" strokeWidth="2" />
    <path d="M-3 25h6L1 35h-2Z" fill="#000090" />
    {labels[0] && <text x="39" y="16" fill="#e00000">{labels[0]}</text>}
    <text x="-30" y="23" fill="#0e0">{labels[1]}</text>
    <text x="-3" y="48" fill="#00f">{labels[2]}</text>
  </g>
);

const Scene = () => (
  <g>
    <path d="M-300 60V689L557 60Z" fill="#fff" />
    <path d="M-300 689 557 60" stroke="#000" strokeWidth="1.600" />
    <path d="M630 724 930 508v700H630Z" fill="#8f8f8f" />
    <g stroke="#a0a0a0" strokeDasharray="2 1" strokeWidth=".9">
      <path d="m703 670 230 67M630 725l300 86M630 802l300 86M630 877l300 86M630 952l300 86M630 1027l300 86" />
      <path d="m630 844 300-221M630 964l300-221M630 1084l300-221" />
    </g>
    <path d="M703.500 672v400M778.500 618v450M852.500 565v500" stroke="#868686" strokeDasharray="1 1" />
    <path d="M630 724V1200" stroke="#606060" strokeWidth="1.600" />
    <path d="M630 724-200 1333" stroke="#678383" strokeWidth=".8" strokeDasharray="3 1" />
    <path d="M630 724 930 508" stroke="#000" strokeWidth="1.800" />
    <path d="m503 458-5 22-4 27v28l4 6h5Z" fill="#7878d8" fillOpacity=".7" />
    <g stroke="#2222f4" strokeWidth=".9">
      {ORDINATES.map(([x, top, bottom]) => <path key={x} d={`M${x + 0.5} ${top}V${bottom}`} />)}
    </g>
    <g fill="none" stroke="#1414f0" strokeWidth="1">
      <polyline points={pts(BASE)} />
      <polyline points={pts(CURVE)} />
    </g>
    <rect x="628" y="723" width="3" height="3" fill="#802020" />
    <Triad x={668} y={718} />
  </g>
);

const Value = ({ x, y, v }: { x: number; y: number; v: string }) => (
  <g>
    <rect x={x - 18} y={y - 6} width="36" height="13" fill="#deded6" fillOpacity=".72" />
    <text x={x} y={y + 4} textAnchor="middle" fill="#5c5ce4" fontSize="10" fontWeight="bold" fontFamily="Liberation Sans, sans-serif">{v}</text>
  </g>
);

const ALL_VALUES: [number, number, string][] = [
  [972, 443, '144.87'], [965, 468, '134.03'], [962, 482, '128.34'], [960, 492, '124.90'], [1002, 497, '101.95'],
  [956, 510, '117.75'], [956, 526, '112.61'], [955, 538, '109.59'], [958, 546, '108.72'], [964, 551, '110.02'],
  [969, 552, '113.48'], [975, 547, '119.04'], [976, 563, '110.74'], [985, 557, '116.56'], [985, 573, '108.62'],
  [995, 566, '114.12'], [995, 578, '107.60'], [1010, 576, '113.02'], [1008, 571, '113.65'], [1031, 559, '124.20'],
  [1053, 584, '113.65'], [1055, 589, '113.02'], [1067, 587, '114.12'], [1067, 599, '107.60'], [1080, 586, '116.56'],
  [1081, 600, '108.62'], [1097, 597, '110.74'], [1097, 582, '119.04'], [1155, 596, '109.59'], [1141, 600, '108.72'],
  [1126, 599, '110.02'], [1111, 593, '113.48'], [1169, 588, '112.61'], [1181, 575, '117.75'], [1196, 551, '128.34'],
  [1192, 559, '124.90'], [1202, 537, '134.03'], [1211, 513, '144.87'], [1241, 567, '101.95'],
];

const ViewWindow = ({ active, origin, children }: { active?: boolean; origin: string; children: React.ReactNode }) => (
  <section
    className={clsx(
      'flex flex-col border px-[8px] pb-[8px]',
      active ? 'rounded-t border-black bg-linear-to-b from-[#98b4d2] to-[#bad2ea] to-[30px]' : 'rounded-tr border-[#5c6268] bg-linear-to-b from-[#c0cedd] to-[#d7e4f2] to-[30px]'
    )}
  >
    <header className="flex h-[30px] items-center pt-[4px]">
      <Icon name="view" />
      <h2 className={clsx('flex-1 pl-[5px]', active ? 'text-black' : 'text-[#8e969e]')}>Punching Load</h2>
      <div className="flex gap-[3px]">
        {['Minimize', 'Restore', 'Close'].map((name) => (
          <button
            key={name}
            aria-label={name}
            className={clsx(
              'flex h-[18px] w-[31px] items-center justify-center rounded-xs border shadow-[inset_0_0_0_1px_rgba(255,255,255,0.45)]',
              active && name === 'Close' && 'border-[#5a1d1a] bg-linear-to-b from-[#dc9486] via-[#bc4436] to-[#c86a50]',
              active && name !== 'Close' && 'border-[#54687e] bg-linear-to-b from-[#bed2e6] via-[#98b2cc] to-[#b4cce2]',
              !active && 'border-[#8394a8]'
            )}
          >
            <svg viewBox="0 0 12 10" className="h-[10px] w-3">
              {name === 'Minimize' && <rect x="1" y="4.500" width="10" height="4" rx="1" fill="#fff" stroke="#4d5560" />}
              {name === 'Restore' && <g fill="#fff" stroke="#4d5560"><rect x="1.500" y=".5" width="9" height="8" rx="1" /><rect x="4.500" y="3.500" width="3" height="2" /></g>}
              {name === 'Close' && <g><path d="m2.500 1.500 7 7M9.500 1.500l-7 7" stroke="#4d5560" strokeWidth="4" /><path d="m2.500 1.500 7 7M9.500 1.500l-7 7" stroke="#fff" strokeWidth="2" /></g>}
            </svg>
          </button>
        ))}
      </div>
    </header>
    <div className="relative flex flex-1 flex-col justify-between overflow-hidden border border-b-white border-l-[#6c7074] border-r-white border-t-[#6c7074] bg-[#9d9d9d] px-[4px] font-[Roboto,Arial,sans-serif] text-[11px] leading-[14px] text-black">
      <svg viewBox={`${origin} 505 900`} preserveAspectRatio="xMidYMid slice" className="absolute inset-0 h-full w-full">
        {children}
      </svg>
      <p className="relative whitespace-pre-line pt-[5px]">{'Punching Load Shear Force at Critical Perimeter [kN/m]\nSections\nRF-PUNCH Pro CA1 - CEN'}</p>
      <p className="relative whitespace-nowrap pb-[5px]">Max Shear Force at Critical Perimeter: 144.87, Min Shear Force at Critical Perimeter: 101.95 kN/m</p>
    </div>
  </section>
);

const Annotations = () => (
  <svg viewBox="0 0 1345 1076" preserveAspectRatio="none" className="pointer-events-none absolute -inset-px z-10 h-[calc(100%+2px)] w-[calc(100%+2px)]" fill="none" stroke="#ff4545">
    <path d="M817 108V133M817 1023v21" strokeWidth="10" strokeLinecap="round" />
    <path d="M817 143v880" strokeWidth="10" strokeDasharray="30 10" />
    <ellipse cx="615" cy="506" rx="177" ry="103" strokeWidth="5" />
    <ellipse cx="1079" cy="509" rx="228" ry="129" strokeWidth="5" />
    <g className="drop-shadow-[2px_3px_2px_rgba(0,0,0,0.5)]">
      <path d="M138 911 424 579" strokeWidth="5" strokeLinecap="round" />
      <path d="m436 565-5 22-16-13Z" fill="#ff4545" strokeWidth="1" />
      <path d="M1024 656 148 1023" strokeWidth="5" strokeLinecap="round" />
      <path d="m133 1028 14-16 8 20Z" fill="#ff4545" strokeWidth="1" />
      <path d="M86 1014 76 970" strokeWidth="5" strokeLinecap="round" />
      <path d="m71 953 14 17-19 4Z" fill="#ff4545" strokeWidth="1" />
    </g>
    <path d="M33.500 920.500h115v22h-115ZM49.500 1025.500h74v27h-74Z" strokeWidth="3" />
  </svg>
);

const MENU = ['File', 'Edit', 'View', 'Insert', 'Calculate', 'Results', 'Tools', 'Ta_ble', 'Options', 'Add-on Modules', 'Window', 'Help'];

const MenuLabel = ({ text }: { text: string }) => {
  const at = Math.max(text.indexOf('_'), 0);
  const plain = text.replace('_', '');
  return <>{plain.slice(0, at)}<u className="underline-offset-2">{plain[at]}</u>{plain.slice(at + 1)}</>;
};

export default function App() {
  return (
    <div className="relative flex min-h-screen flex-col overflow-hidden border border-[#3b9ce6] bg-[#d0d4de] font-['Open_Sans',sans-serif] text-[11px] leading-[16px]">
      <header className="flex h-[30px] items-center bg-white pl-[8px] text-black">
        <Icon name="app" />
        <h1 className="flex-1 pl-[5px]">RFEM 5.22.00 x64 - Punching Load</h1>
        <button aria-label="Minimize window" className="flex h-full w-[46px] items-center justify-center"><svg viewBox="0 0 11 11" className="h-[11px] w-[11px]"><path d="M0 5.500h11" stroke="#000" /></svg></button>
        <button aria-label="Maximize window" className="flex h-full w-[46px] items-center justify-center"><svg viewBox="0 0 11 11" className="h-[11px] w-[11px]"><path d="M.5 .5h10v10H.5Z" fill="none" stroke="#000" /></svg></button>
        <button aria-label="Close window" className="flex h-full w-[46px] items-center justify-center"><svg viewBox="0 0 11 11" className="h-[11px] w-[11px]"><path d="m.5 .5 10 10M10.500 .5l-10 10" stroke="#000" /></svg></button>
      </header>

      <nav className="flex h-6 items-center text-[#4d5158]">
        <span className="ml-[4px] mr-[2px] h-3 w-[2px] border-l-2 border-dotted border-[#9ea4b1]" />
        {MENU.map((item) => (
          <button key={item} className="px-[8px] whitespace-nowrap hover:bg-[#e6e9ef]"><MenuLabel text={item} /></button>
        ))}
      </nav>

      <div className="flex h-[26px]">
        <Bar>
          <Tools items={BAR_FILE} />
          <select aria-label="Load case" className="mx-[2px] h-5 w-[216px] shrink-0 appearance-none bg-white bg-[linear-gradient(#dde1e9,#dde1e9)] bg-[length:14px_100%] bg-right bg-no-repeat px-[3px] text-black">
            <option>RF-PUNCH Pro CA1 - CEN</option>
          </select>
          <svg viewBox="0 0 6 3" className="pointer-events-none relative -ml-[13px] mr-[7px] h-[3px] w-[6px]"><path d="M0 0h6L3 3Z" fill="#777" /></svg>
          <Tools items={BAR_CASE} />
        </Bar>
        <Bar><Tools items={BAR_GRID} /></Bar>
        <Bar><Tools items={BAR_EXPORT} /></Bar>
      </div>
      <div className="flex h-[26px]">
        <Bar><Tools items={BAR_INSERT} /></Bar>
        <Bar><Tools items={BAR_VIEW} /></Bar>
        <Bar><Tools items={BAR_RESULT} /></Bar>
      </div>

      <div className="flex flex-1">
        <Navigator />
        <main className="ml-[5px] mr-px grid flex-1 grid-cols-2 border-x border-t-2 border-[#77797e] pb-[2px] pt-px">
          <ViewWindow active origin="302 142">
            <Scene />
            <Value x={727} y={492} v="144.87" />
            <Triad x={357} y={912} />
            <Triad x={778} y={617} labels={['', 'y', 'z']} />
            <path d="m302 1038 20 5" stroke="#f00" strokeWidth="2" />
          </ViewWindow>
          <ViewWindow origin="827 142">
            <g transform="translate(463 20)"><Scene /></g>
            {ALL_VALUES.map(([x, y, v]) => <Value key={`${x}-${y}`} x={x} y={y} v={v} />)}
            <Triad x={882} y={912} />
          </ViewWindow>
        </main>
      </div>

      <footer className="flex h-[21px] items-center bg-linear-to-b from-[#e2e5eb] via-[#b0b5bf] to-[#c2c6cf] text-[#33363c]">
        <span className="flex-1 pl-[4px]">Surface No. 2</span>
        <div className="flex gap-[2px]">
          {['SNAP', 'GRID', 'CARTES', 'OSNAP', 'GLINES', 'DXF'].map((m) => (
            <button key={m} className="h-[18px] border border-b-white border-l-black border-r-white border-t-black px-[3px]">{m}</button>
          ))}
        </div>
        <div className="flex h-full w-[517px] justify-end">
          {[0, 1, 2, 3].map((i) => <span key={i} className="my-[2px] w-[73px] border-l border-[#9a9fa9]" />)}
          <svg viewBox="0 0 36 20" className="h-5 w-9"><path d="M33 8v1M33 12v1M29 12v1M33 16v1M29 16v1M25 16v1" stroke="#6d727c" strokeWidth="2" /></svg>
        </div>
      </footer>

      <Annotations />
    </div>
  );
}
